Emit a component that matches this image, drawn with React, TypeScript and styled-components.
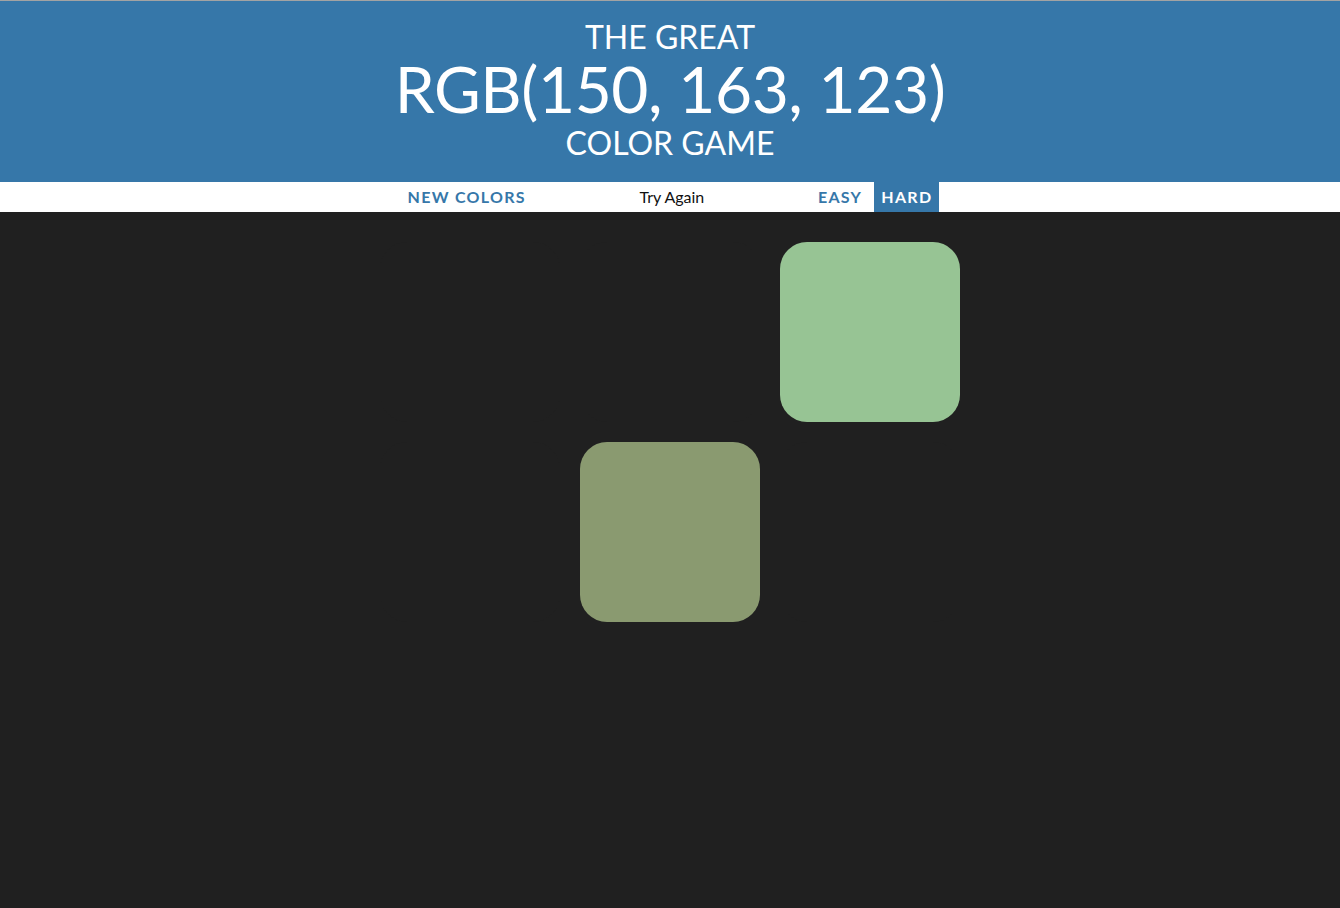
import styled, { createGlobalStyle } from "styled-components";

const GlobalStyle = createGlobalStyle`
  html, body {
    margin: 0;
    padding: 0;
    background: #202020;
  }
  body {
    font-family: Lato, "Noto Sans", sans-serif;
    min-height: 908px;
  }
`;

const Title = styled.h1`
  margin: 0;
  padding: 18px 0 22px;
  border-top: 1px solid #a3a3a3;
  background: #3677a9;
  color: #ffffff;
  text-align: center;
  text-transform: uppercase;
  font-weight: 400;
  font-size: 32px;
  line-height: 1.1;
`;

const Line = styled.span<{ $big?: boolean }>`
  display: block;
  font-size: ${(props) => (props.$big ? "64px" : "32px")};
  letter-spacing: ${(props) => (props.$big ? "-0.4px" : "0")};
`;

const Stripe = styled.div`
  display: flex;
  justify-content: center;
  align-items: stretch;
  gap: 5px;
  height: 30px;
  background: #ffffff;
`;

const Button = styled.button<{ $selected?: boolean }>`
  border: none;
  margin: 0;
  padding: 0 7px;
  height: 100%;
  font-family: inherit;
  font-size: 16px;
  font-weight: 700;
  letter-spacing: 1.3px;
  text-transform: uppercase;
  color: ${(props) => (props.$selected ? "#ffffff" : "#3677a9")};
  background: ${(props) => (props.$selected ? "#3677a9" : "#ffffff")};
  cursor: pointer;
`;

const Message = styled.span`
  display: inline-flex;
  align-items: center;
  justify-content: center;
  width: 20%;
  font-size: 16px;
  color: #111111;
`;

const Board = styled.div`
  display: grid;
  grid-template-columns: repeat(3, 180px);
  gap: 20px;
  width: 580px;
  margin: 30px auto 0;
`;

const Square = styled.div<{ $color: string }>`
  width: 180px;
  height: 180px;
  border-radius: 27px;
  background: ${(props) => props.$color};
`;

const hidden = "#202020";
const squares = [hidden, hidden, "#97c494", hidden, "#8a9a70", hidden];

export default function App() {
  return (
    <>
      <GlobalStyle />
      <Title>
        <Line>The Great</Line>
        <Line $big>RGB(150, 163, 123)</Line>
        <Line>Color Game</Line>
      </Title>
      <Stripe>
        <Button>New Colors</Button>
        <Message>Try Again</Message>
        <Button>Easy</Button>
        <Button $selected>Hard</Button>
      </Stripe>
      <Board>
        {squares.map((color, i) => (
          <Square key={i} $color={color} />
        ))}
      </Board>
    </>
  );
}
